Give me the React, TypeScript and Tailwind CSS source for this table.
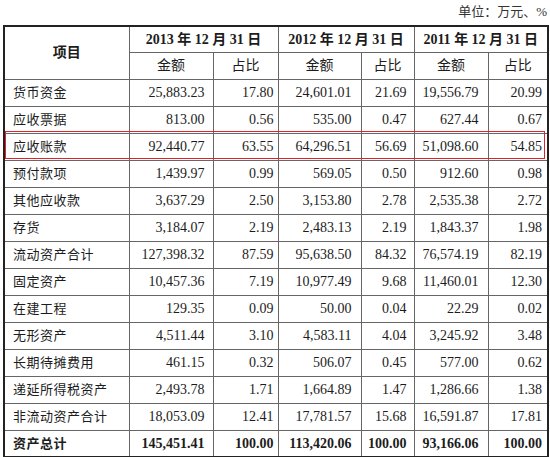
import React from "react";

const rows: [string, string, string, string, string, string, string][] = [
  ["货币资金", "25,883.23", "17.80", "24,601.01", "21.69", "19,556.79", "20.99"],
  ["应收票据", "813.00", "0.56", "535.00", "0.47", "627.44", "0.67"],
  ["应收账款", "92,440.77", "63.55", "64,296.51", "56.69", "51,098.60", "54.85"],
  ["预付款项", "1,439.97", "0.99", "569.05", "0.50", "912.60", "0.98"],
  ["其他应收款", "3,637.29", "2.50", "3,153.80", "2.78", "2,535.38", "2.72"],
  ["存货", "3,184.07", "2.19", "2,483.13", "2.19", "1,843.37", "1.98"],
  ["流动资产合计", "127,398.32", "87.59", "95,638.50", "84.32", "76,574.19", "82.19"],
  ["固定资产", "10,457.36", "7.19", "10,977.49", "9.68", "11,460.01", "12.30"],
  ["在建工程", "129.35", "0.09", "50.00", "0.04", "22.29", "0.02"],
  ["无形资产", "4,511.44", "3.10", "4,583.11", "4.04", "3,245.92", "3.48"],
  ["长期待摊费用", "461.15", "0.32", "506.07", "0.45", "577.00", "0.62"],
  ["递延所得税资产", "2,493.78", "1.71", "1,664.89", "1.47", "1,286.66", "1.38"],
  ["非流动资产合计", "18,053.09", "12.41", "17,781.57", "15.68", "16,591.87", "17.81"],
  ["资产总计", "145,451.41", "100.00", "113,420.06", "100.00", "93,166.06", "100.00"],
];

const padR = ["pr-[8px]", "pr-[4px]", "pr-[9px]", "pr-[7px]", "pr-[9px]", "pr-[5px]"];

export default function App() {
  return (
    <div
      className="w-[550px] h-[457px] bg-white text-[#1c1c1c] relative overflow-hidden"
      style={{ fontFamily: '"Liberation Serif", "Noto Sans CJK SC", serif' }}
    >
      <div className="h-[25px] flex items-start justify-end pr-[3px] pt-[4px] text-[13px] leading-[16px] text-[#333]">
        单位：万元、%
      </div>
      <table className="ml-[3px] w-[545px] table-fixed border-collapse border-2 border-[#222]">
        <colgroup>
          <col className="w-[125px]" />
          <col className="w-[84px]" />
          <col className="w-[65px]" />
          <col className="w-[83px]" />
          <col className="w-[53px]" />
          <col className="w-[74px]" />
          <col className="w-[60px]" />
        </colgroup>
        <thead>
          <tr className="h-[26px]">
            <th rowSpan={2} className="border border-[#666] text-[14px] font-bold text-center align-middle">
              项目
            </th>
            {["2013", "2012", "2011"].map((y) => (
              <th key={y} colSpan={2} className="border border-[#666] text-[14px] font-bold text-center p-0">
                {y} 年 12 月 31 日
              </th>
            ))}
          </tr>
          <tr className="h-[27px]">
            {[0, 1, 2].map((i) => (
              <React.Fragment key={i}>
                <th className="border border-[#666] text-[14px] font-normal text-center p-0">金额</th>
                <th className="border border-[#666] text-[14px] font-normal text-center p-0">占比</th>
              </React.Fragment>
            ))}
          </tr>
        </thead>
        <tbody>
          {rows.map((r, ri) => {
            const last = ri === rows.length - 1;
            return (
              <tr key={r[0]} className="h-[27px]">
                <td
                  className={`border border-[#666] text-[13px] pl-[8px] p-0 whitespace-nowrap tracking-[0.5px] ${
                    last ? "font-bold" : ""
                  }`}
                >
                  {r[0]}
                </td>
                {r.slice(1).map((v, ci) => (
                  <td
                    key={ci}
                    className={`border border-[#666] text-[14px] text-right p-0 ${padR[ci]} ${
                      last ? "font-bold" : ""
                    }`}
                  >
                    {v}
                  </td>
                ))}
              </tr>
            );
          })}
        </tbody>
      </table>
      <div className="absolute left-[5px] top-[131px] w-[540px] h-[28px] border-[1.5px] border-[#e0222a] pointer-events-none" />
    </div>
  );
}
